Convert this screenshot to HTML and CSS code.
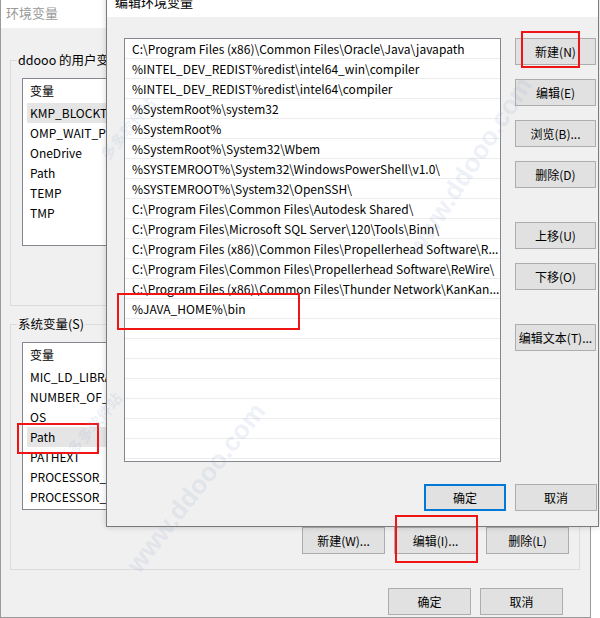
FILE: index.html
```html
<!DOCTYPE html>
<html lang="zh-CN">
<head>
<meta charset="utf-8">
<title>环境变量</title>
<link rel="stylesheet" href="styles.css">
</head>
<body>
<div class="screen">
  <div class="bg-window">
    <div class="bg-title">环境变量</div>
    <div class="bg-body">
      <fieldset class="group user-group">
        <legend>ddooo 的用户变量(U)</legend>
        <div class="listview">
          <div class="lv-header"><span class="col-name">变量</span><span class="col-val">值</span></div>
          <div class="lv-row selected"><span class="col-name">KMP_BLOCKTIME</span></div>
          <div class="lv-row"><span class="col-name">OMP_WAIT_POLICY</span></div>
          <div class="lv-row"><span class="col-name">OneDrive</span></div>
          <div class="lv-row"><span class="col-name">Path</span></div>
          <div class="lv-row"><span class="col-name">TEMP</span></div>
          <div class="lv-row"><span class="col-name">TMP</span></div>
        </div>
        <div class="group-buttons">
          <button class="btn">新建(N)...</button>
          <button class="btn">编辑(E)...</button>
          <button class="btn">删除(D)</button>
        </div>
      </fieldset>
      <fieldset class="group sys-group">
        <legend>系统变量(S)</legend>
        <div class="listview">
          <div class="lv-header"><span class="col-name">变量</span><span class="col-val">值</span></div>
          <div class="lv-row"><span class="col-name">MIC_LD_LIBRARY_PATH</span></div>
          <div class="lv-row"><span class="col-name">NUMBER_OF_PROCESSORS</span></div>
          <div class="lv-row"><span class="col-name">OS</span></div>
          <div class="lv-row selected"><span class="col-name">Path</span></div>
          <div class="lv-row"><span class="col-name">PATHEXT</span></div>
          <div class="lv-row"><span class="col-name">PROCESSOR_ARCHITECTURE</span></div>
          <div class="lv-row"><span class="col-name">PROCESSOR_IDENTIFIER</span></div>
        </div>
        <div class="group-buttons">
          <button class="btn">新建(W)...</button>
          <button class="btn">编辑(I)...</button>
          <button class="btn">删除(L)</button>
        </div>
      </fieldset>
      <div class="bottom-buttons">
        <button class="btn">确定</button>
        <button class="btn">取消</button>
      </div>
    </div>
  </div>

  <div class="dialog">
    <div class="dlg-title">编辑环境变量</div>
    <div class="dlg-body">
      <div class="dlg-main">
        <div class="path-list">
          <div class="p-row">C:\Program Files (x86)\Common Files\Oracle\Java\javapath</div>
          <div class="p-row">%INTEL_DEV_REDIST%redist\intel64_win\compiler</div>
          <div class="p-row">%INTEL_DEV_REDIST%redist\intel64\compiler</div>
          <div class="p-row">%SystemRoot%\system32</div>
          <div class="p-row">%SystemRoot%</div>
          <div class="p-row">%SystemRoot%\System32\Wbem</div>
          <div class="p-row">%SYSTEMROOT%\System32\WindowsPowerShell\v1.0\</div>
          <div class="p-row">%SYSTEMROOT%\System32\OpenSSH\</div>
          <div class="p-row">C:\Program Files\Common Files\Autodesk Shared\</div>
          <div class="p-row">C:\Program Files\Microsoft SQL Server\120\Tools\Binn\</div>
          <div class="p-row">C:\Program Files (x86)\Common Files\Propellerhead Software\R...</div>
          <div class="p-row">C:\Program Files\Common Files\Propellerhead Software\ReWire\</div>
          <div class="p-row">C:\Program Files (x86)\Common Files\Thunder Network\KanKan...</div>
          <div class="p-row">%JAVA_HOME%\bin</div>
          <div class="p-row"></div>
          <div class="p-row"></div>
          <div class="p-row"></div>
          <div class="p-row"></div>
          <div class="p-row"></div>
          <div class="p-row"></div>
          <div class="p-row"></div>
        </div>
        <div class="side-buttons">
          <button class="btn">新建(N)</button>
          <button class="btn">编辑(E)</button>
          <button class="btn">浏览(B)...</button>
          <button class="btn">删除(D)</button>
          <button class="btn spaced">上移(U)</button>
          <button class="btn">下移(O)</button>
          <button class="btn spaced">编辑文本(T)...</button>
        </div>
      </div>
      <div class="dlg-footer">
        <button class="btn default">确定</button>
        <button class="btn">取消</button>
      </div>
    </div>
  </div>

  <div class="mark mark-new"></div>
  <div class="mark mark-java"></div>
  <div class="mark mark-path"></div>
  <div class="mark mark-edit"></div>

  <div class="wm wm-1">多多软件站</div>
  <div class="wm wm-2">www.ddooo.com</div>
  <div class="wm wm-3">多多软件站</div>
  <div class="wm wm-4">www.ddooo.com</div>
</div>
</body>
</html>
```
FILE: styles.css
```css
html, body {
  margin: 0;
  padding: 0;
  background: #ffffff;
}

body {
  font-family: "Noto Sans CJK SC", "Microsoft YaHei", sans-serif;
  font-size: 12px;
  color: #000;
}

.screen {
  position: relative;
  width: 600px;
  height: 618px;
  overflow: hidden;
  background: #ffffff;
}

/* ---------- background window ---------- */
.bg-window {
  width: 591px;
  height: 618px;
  box-sizing: border-box;
  border-left: 1px solid #9a9a9a;
  border-right: 1px solid #9a9a9a;
  border-bottom: 1px solid #9a9a9a;
  background: #f0f0f0;
  display: flex;
  flex-direction: column;
}

.bg-title {
  height: 28px;
  flex: none;
  background: #ffffff;
  color: #9a9a9a;
  line-height: 26px;
  padding-left: 5px;
  font-size: 13px;
}

.bg-body {
  padding: 24px 10px 0 9px;
  display: flex;
  flex-direction: column;
}

.group {
  margin: 0;
  min-width: 0;
  border: 1px solid #dcdcdc;
  padding: 10px 10px 15px 11px;
}

.group legend {
  margin-left: -5px;
  padding: 0 1px;
  line-height: 16px;
  font-size: 12.5px;
  white-space: nowrap;
}

.sys-group {
  margin-top: 10px;
}

.listview {
  height: 168px;
  box-sizing: border-box;
  border: 1px solid #828790;
  background: #ffffff;
  overflow: hidden;
}

.lv-header {
  height: 24px;
  line-height: 24px;
  padding-left: 7px;
  display: flex;
  white-space: nowrap;
}

.lv-row {
  height: 20px;
  line-height: 20px;
  margin-left: 4px;
  padding-left: 3px;
  display: flex;
  white-space: nowrap;
}

.lv-row.selected {
  background: #e5e5e5;
}

.col-name {
  width: 150px;
  flex: none;
  overflow: hidden;
}

.col-val {
  flex: none;
}

.group-buttons {
  margin-top: 17px;
  display: flex;
  justify-content: flex-end;
  gap: 9px;
}

.bottom-buttons {
  margin-top: 18px;
  padding-right: 17px;
  display: flex;
  justify-content: flex-end;
  gap: 9px;
}

.btn {
  width: 83px;
  height: 27px;
  box-sizing: border-box;
  border: 1px solid #adadad;
  background: #e1e1e1;
  font-family: "Noto Sans CJK SC", "Microsoft YaHei", sans-serif;
  font-size: 12px;
  color: #000;
  padding: 0;
  line-height: 25px;
  text-align: center;
  white-space: nowrap;
}

/* ---------- foreground dialog ---------- */
.dialog {
  position: absolute;
  left: 106px;
  top: -14px;
  width: 493px;
  height: 541px;
  box-sizing: border-box;
  border: 1px solid #7a7a7a;
  background: #f0f0f0;
  display: flex;
  flex-direction: column;
  box-shadow: 0 0 6px rgba(0, 0, 0, 0.18);
}

.dlg-title {
  height: 30px;
  flex: none;
  background: #ffffff;
  line-height: 30px;
  padding-left: 8px;
  font-size: 13px;
}

.dlg-body {
  padding: 21px 1px 15px 17px;
  display: flex;
  flex-direction: column;
}

.dlg-main {
  display: flex;
  gap: 14px;
}

.path-list {
  width: 377px;
  height: 424px;
  flex: none;
  box-sizing: border-box;
  border: 1px solid #828790;
  background: #ffffff;
  overflow: hidden;
}

.p-row {
  height: 20px;
  box-sizing: border-box;
  border-bottom: 1px solid #ececec;
  line-height: 19px;
  padding-left: 7px;
  white-space: nowrap;
  overflow: hidden;
}

.side-buttons {
  width: 81px;
  display: flex;
  flex-direction: column;
  gap: 14px;
}

.side-buttons .btn {
  width: 81px;
}

.side-buttons .btn.spaced {
  margin-top: 20px;
}

.dlg-footer {
  margin-top: 22px;
  display: flex;
  justify-content: flex-end;
  gap: 9px;
}

.dlg-footer .btn {
  width: 82px;
}

.btn.default {
  border-color: #0078d7;
  box-shadow: inset 0 0 0 1px #0078d7;
}

/* ---------- annotations ---------- */
.mark {
  position: absolute;
  box-sizing: border-box;
  border: 2px solid #f01414;
}

.mark-new  { left: 521px; top: 31px;  width: 59px; height: 37px; }
.mark-java { left: 117px; top: 293px; width: 183px; height: 37px; }
.mark-path { left: 17px;  top: 423px; width: 82px; height: 31px; }
.mark-edit { left: 395px; top: 515px; width: 83px; height: 48px; }

/* ---------- watermark ---------- */
.wm {
  position: absolute;
  white-space: nowrap;
  color: rgba(150, 170, 205, 0.18);
  font-family: "Liberation Sans", "Noto Sans CJK SC", sans-serif;
  font-weight: bold;
  transform-origin: 0 0;
  pointer-events: none;
}

.wm-1 { left: 62px;  top: 445px; font-size: 15px; transform: rotate(-50deg); }
.wm-2 { left: 120px; top: 560px; font-size: 26px; transform: rotate(-52deg); }
.wm-3 { left: 95px;  top: 150px; font-size: 15px; transform: rotate(-50deg); }
.wm-4 { left: 400px; top: 245px; font-size: 26px; transform: rotate(-57deg); }
```
